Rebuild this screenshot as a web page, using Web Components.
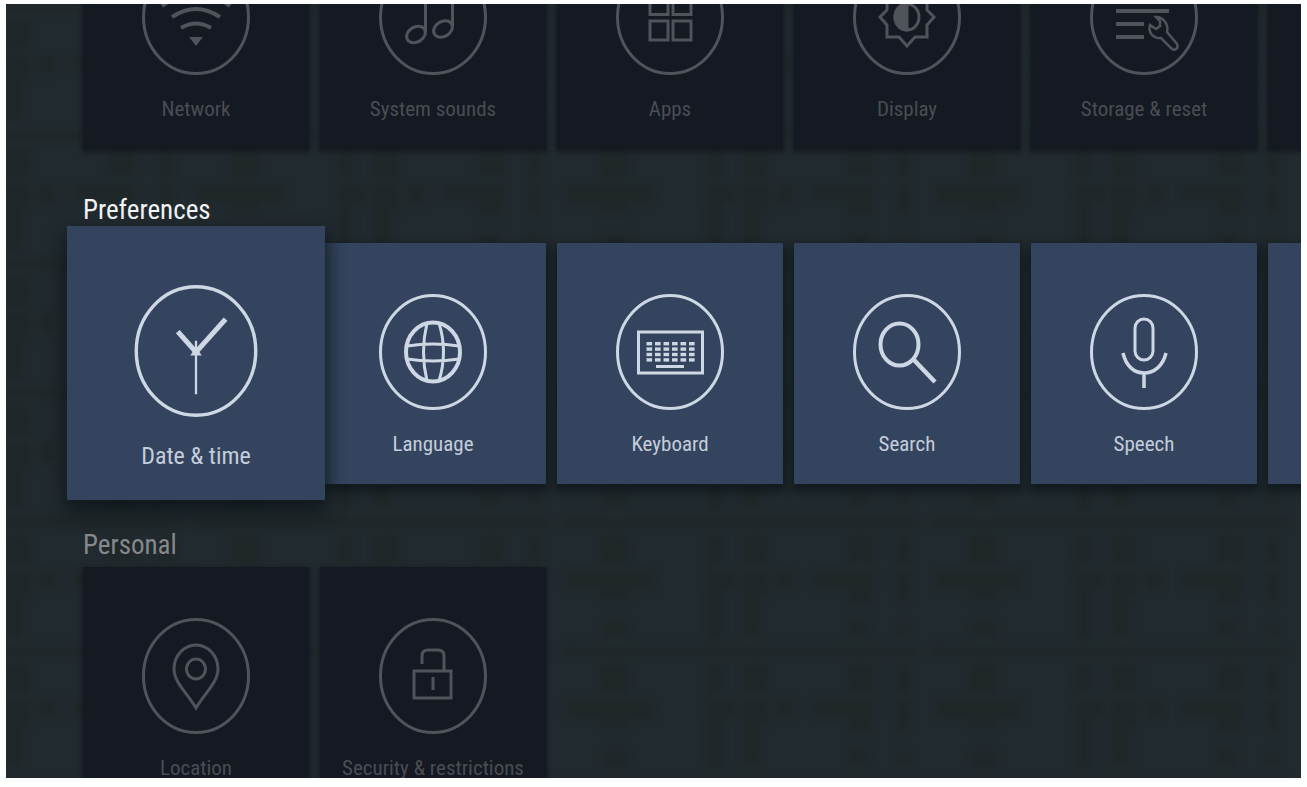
<!DOCTYPE html>
<html lang="en">
<head>
<meta charset="utf-8">
<title>Settings</title>
<style>
  html, body {
    height: 100%;
  }

  body {
    margin: 0;
    padding: 4px 6px 9px;
    box-sizing: border-box;
    background: #fdfefe;
    font-family: "Roboto Condensed", "Liberation Sans Narrow", Roboto, sans-serif;
  }
</style>
</head>
<body>
<settings-screen>
  <settings-row>
    <settings-card icon="network">Network</settings-card>
    <settings-card icon="sounds">System sounds</settings-card>
    <settings-card icon="apps">Apps</settings-card>
    <settings-card icon="display">Display</settings-card>
    <settings-card icon="storage">Storage &amp; reset</settings-card>
    <settings-card></settings-card>
  </settings-row>
  <settings-row heading="Preferences" active>
    <settings-card icon="clock" focused>Date &amp; time</settings-card>
    <settings-card icon="language">Language</settings-card>
    <settings-card icon="keyboard">Keyboard</settings-card>
    <settings-card icon="search">Search</settings-card>
    <settings-card icon="speech">Speech</settings-card>
    <settings-card></settings-card>
  </settings-row>
  <settings-row heading="Personal">
    <settings-card icon="location">Location</settings-card>
    <settings-card icon="security">Security &amp; restrictions</settings-card>
  </settings-row>
</settings-screen>

<script>
// Icon shapes, drawn inside a 108 x 116 ring
const keys = [0, 1, 2, 3].map(row =>
  [0, 1, 2, 3, 4, 5].map(col =>
    `<rect x="${30.5 + col * 8.5}" y="${48 + row * 5.4}" width="5.6" height="3.4"/>`
  ).join("")
).join("");

const icons = {
  network: `
    <path d="M20 47Q54 20 88 47M30 58Q54 42 78 58M39 69Q54 60 69 69" stroke-width="4"/>
    <path d="M47 78h14l-7 9z" fill="currentColor" stroke="none"/>`,
  sounds: `
    <ellipse cx="37" cy="75.5" rx="10" ry="7.5" transform="rotate(-32 37 75.5)"/>
    <ellipse cx="64" cy="70" rx="10" ry="7.5" transform="rotate(-32 64 70)"/>
    <path d="M46.5 72V32L73.500 26V67"/>`,
  apps: `
    <path d="M34 35h18v20.500H34zM57 35h18v20.500H57zM34 62h18v19H34zM57 62h18v19H57z"/>`,
  display: `
    <path d="M54 29l8 9h12v13l7 7-7 8v12H62l-8 9-8-9H34V66l-7-8 7-7V38h12z"/>
    <ellipse cx="54" cy="58" rx="12" ry="13"/>
    <path d="M54 45a12 13 0 0 0 0 26z" fill="currentColor"/>`,
  storage: `
    <path d="M26 39h53M26 52h53M26 65h28M26 78h28" stroke-width="4"/>
    <path d="M66 58l4 4v5l-4 3-6-4c-2 7 3 14 11 13l11 11c3 2 7-1 5-5L77 73c2-8-4-15-11-15z" stroke-width="2.5"/>`,
  clock: `
    <path d="M54 59L38 41M54 59L80 30" stroke-width="4.500"/>
    <path d="M54 49V96" stroke-width="2"/>
    <path d="M54 54l5 8H49z" fill="currentColor" stroke="none"/>`,
  language: `
    <ellipse cx="54" cy="58" rx="27" ry="29.5" stroke-width="4"/>
    <path d="M48 29Q41 58 48 87M60 29Q69 58 60 87M28 52Q54 48 80 52M28 65Q54 69 80 65"/>`,
  keyboard: `
    <rect x="22.5" y="38" width="64" height="41"/>
    <g fill="currentColor" stroke="none">${keys}<rect x="40" y="71" width="28" height="3"/></g>`,
  search: `
    <ellipse cx="46.5" cy="50.5" rx="19" ry="21" stroke-width="4"/>
    <path d="M61 66l21 22" stroke-width="4.500"/>`,
  speech: `
    <rect x="45" y="25" width="18" height="41" rx="9"/>
    <path d="M33 59c3 13 11 20 21 20s19-7 22-20M54 79v15" stroke-width="3.5"/>`,
  location: `
    <path d="M54 90C45 75 32 64 32 51a22 24 0 0 1 44 0C76 64 63 75 54 90z"/>
    <ellipse cx="54" cy="51" rx="9.5" ry="10"/>`,
  security: `
    <path d="M35 53h37v27H35zM43 46v-8q0-6 6-6h10q6 0 6 6v15M54 59v13"/>`
};

class SettingsScreen extends HTMLElement {
  constructor() {
    super();
    this.attachShadow({ mode: "open" });
  }

  connectedCallback() {
    this.shadowRoot.innerHTML = `
      <style>
        :host {
          display: block;
          position: relative;
          height: 100%;
          overflow: hidden;
          background-color: #212a2e;
        }

        .backdrop {
          position: absolute;
          inset: 0;
          width: 100%;
          height: 100%;
          filter: blur(3px);
        }

        /* The list is scrolled so that the active row sits in the middle */
        main {
          display: flex;
          flex-direction: column;
          gap: 45px;
          position: relative;
          margin-top: -96px;
          padding-left: 77px;
        }
      </style>
      <svg class="backdrop" aria-hidden="true">
        <pattern id="blocks" x="557" y="514" width="369" height="129" patternUnits="userSpaceOnUse">
          <path fill="#1f2728" d="M0 0h355v9H0z
            M37 18h28v28H37zM4 54h85v17H4zM37 71h28v10H37zM40 104h25v15H40z
            M144 18h15v28h-15zM144 54h28v17h-28zM145 71h14v50h-14z
            M180 18h25v28h-25zM180 54h25v25h-25zM180 79h17v40h-17zM214 54h16v17h-16z
            M285 18h25v26h-25zM250 54h60v15h-60zM285 69h24v15h-24zM285 103h20v15h-20z
            M334 18h13v28h-13zM334 54h13v29h-13zM334 106h13v10h-13z"/>
        </pattern>
        <rect width="100%" height="100%" fill="url(#blocks)"/>
      </svg>
      <main><slot></slot></main>
    `;
  }
}

class SettingsRow extends HTMLElement {
  constructor() {
    super();
    this.attachShadow({ mode: "open" });
  }

  connectedCallback() {
    const heading = this.getAttribute("heading");

    this.shadowRoot.innerHTML = `
      <style>
        :host {
          display: block;
          --card: #141922;
          --line: #50535a;
          --text: #4a4d53;
          --outline: 0 2px 4px 1px #151b22;
        }

        :host([active]) {
          --card: #34445e;
          --line: #ced7e4;
          --text: #c3cddb;
          --outline: 0 5px 10px 2px #10191d;
        }

        h2 {
          margin: 0 0 6px;
          font-size: 27px;
          font-weight: 400;
          line-height: 32px;
          color: #85898b;
        }

        :host([active]) h2 {
          margin-bottom: 17px;
          color: #f1f4f5;
        }

        .cards {
          display: flex;
          gap: 11px;
        }
      </style>
      ${heading ? `<h2>${heading}</h2>` : ""}
      <div class="cards"><slot></slot></div>
    `;
  }
}

class SettingsCard extends HTMLElement {
  constructor() {
    super();
    this.attachShadow({ mode: "open" });
  }

  connectedCallback() {
    const icon = icons[this.getAttribute("icon")];

    this.shadowRoot.innerHTML = `
      <style>
        :host {
          display: block;
          flex: none;
          width: 226px;
          height: 241px;
        }

        button {
          display: flex;
          flex-direction: column;
          align-items: center;
          gap: 22px;
          width: 100%;
          height: 100%;
          padding: 51px 0 0;
          border: 0;
          border-radius: 1px;
          background: var(--card);
          box-shadow: var(--outline);
          color: var(--text);
          font: inherit;
          font-size: 21px;
          line-height: 24px;
          white-space: nowrap;
          cursor: pointer;
        }

        svg {
          width: 108px;
          height: 116px;
          color: var(--line);
          fill: none;
          stroke: currentColor;
          stroke-width: 3px;
        }

        /* The focused card grows over its neighbours */
        :host([focused]) {
          position: relative;
          z-index: 1;
          width: 258px;
          height: 274px;
          margin: -17px -16px -16px;
        }

        :host([focused]) button {
          gap: 25px;
          padding-top: 59px;
          box-shadow: 0 10px 18px 2px #10191d;
          font-size: 24px;
          line-height: 28px;
        }

        :host([focused]) svg {
          width: 124px;
          height: 132px;
        }
      </style>
      <button type="button">
        ${icon ? `
        <svg viewBox="0 0 108 116" aria-hidden="true">
          <ellipse cx="54" cy="58" rx="52.5" ry="56.5"/>
          ${icon}
        </svg>` : ""}
        <span><slot></slot></span>
      </button>
    `;
  }
}

customElements.define("settings-screen", SettingsScreen);
customElements.define("settings-row", SettingsRow);
customElements.define("settings-card", SettingsCard);
</script>
</body>
</html>
